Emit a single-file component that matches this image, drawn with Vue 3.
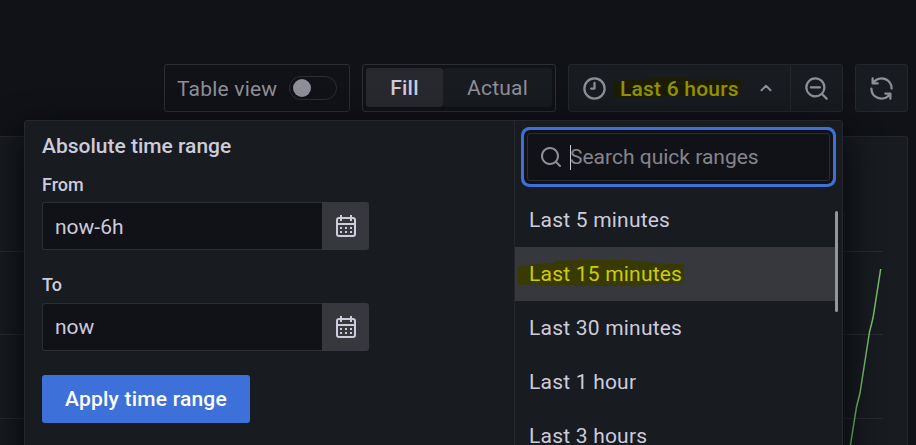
<script setup>
import { ref } from 'vue'

const fields = ref([
  { label: 'From', value: 'now-6h' },
  { label: 'To', value: 'now' },
])
const ranges = ['Last 5 minutes', 'Last 15 minutes', 'Last 30 minutes', 'Last 1 hour', 'Last 3 hours']
const active = 'Last 15 minutes'
</script>

<template>
  <div class="page">
    <header class="toolbar">
      <div class="box table-view">
        <span class="table-label">Table view</span>
        <span class="switch"><i class="knob"></i></span>
      </div>
      <div class="box radio">
        <span class="option selected">Fill</span>
        <span class="option">Actual</span>
      </div>
      <div class="picker">
        <button class="btn time">
          <svg class="glyph" width="27" height="27" viewBox="0 0 24 24">
            <path d="M12,2A10,10,0,1,0,22,12,10,10,0,0,0,12,2Zm0,18a8,8,0,1,1,8-8A8,8,0,0,1,12,20ZM12,6a1,1,0,0,0-1,1v4H9a1,1,0,0,0,0,2h3a1,1,0,0,0,1-1V7A1,1,0,0,0,12,6Z" />
          </svg>
          <span class="marked time-label">
            <svg class="marker" width="128" height="22" viewBox="0 0 128 22">
              <path d="M0 3H11V2H24V1H36V0H74V1H128V17H103V18H50V19H14V20H0Z" />
            </svg>
            <span class="marked-text">Last 6 hours</span>
          </span>
          <svg class="icon chevron" width="12" height="8" viewBox="0 0 12 8"><path d="M1.5 6.3 6 1.8 10.5 6.3" /></svg>
        </button>
        <button class="btn zoom">
          <svg class="glyph" width="27" height="27" viewBox="0 0 24 24">
            <path d="M21.71,20.29,18,16.61A9,9,0,1,0,16.61,18l3.68,3.68a1,1,0,0,0,1.42,0A1,1,0,0,0,21.71,20.29ZM11,18a7,7,0,1,1,7-7A7,7,0,0,1,11,18ZM15,10H7a1,1,0,0,0,0,2h8a1,1,0,0,0,0-2Z" />
          </svg>
        </button>
      </div>
      <button class="btn refresh">
        <svg class="glyph" width="27" height="27" viewBox="0 0 24 24">
          <path d="M19.91,15.51H15.38a1,1,0,0,0,0,2h2.4A8,8,0,0,1,4,12a1,1,0,0,0-2,0,10,10,0,0,0,16.88,7.23V21a1,1,0,0,0,2,0V16.5A1,1,0,0,0,19.91,15.51ZM12,2A10,10,0,0,0,5.12,4.77V3a1,1,0,0,0-2,0V7.5a1,1,0,0,0,1,1h4.5a1,1,0,0,0,0-2H6.22A8,8,0,0,1,20,12a1,1,0,0,0,2,0A10,10,0,0,0,12,2Z" />
        </svg>
      </button>
    </header>

    <main class="panel">
      <svg class="chart" width="908" height="308" viewBox="0 0 908 308">
        <path class="grid" d="M0 114.5H883M0 197.5H883M0 281.5H883M844.5 73V308" />
        <path class="series" d="M880.7 132 873 181 869.5 195 860 256 856.5 270 850.3 309" />
      </svg>
    </main>

    <div class="popup">
      <section class="absolute-range">
        <h3>Absolute time range</h3>
        <div v-for="f in fields" :key="f.label" class="field">
          <label>{{ f.label }}</label>
          <div class="input-row">
            <div class="input">{{ f.value }}</div>
            <button class="calendar">
              <svg width="20" height="22" viewBox="0 0 20 22">
                <rect class="frame" x="1" y="3" width="18" height="18" rx="2" />
                <path class="frame" d="M5 0V6M15 0V6M1 9H19" />
                <path class="dots" d="M4 12h2v2H4zM9 12h2v2H9zM14 12h2v2h-2zM4 16h2v2H4zM9 16h2v2H9zM14 16h2v2h-2z" />
              </svg>
            </button>
          </div>
        </div>
        <button class="apply">Apply time range</button>
      </section>
      <section class="quick">
        <div class="search">
          <svg class="glyph-flat" width="24" height="24" viewBox="0 0 24 24">
            <path d="M21.71,20.29,18,16.61A9,9,0,1,0,16.61,18l3.68,3.68a1,1,0,0,0,1.42,0A1,1,0,0,0,21.71,20.29ZM11,18a7,7,0,1,1,7-7A7,7,0,0,1,11,18Z" />
          </svg>
          <i class="caret"></i>
          <span class="placeholder">Search quick ranges</span>
        </div>
        <ul class="list">
          <li v-for="r in ranges" :key="r" :class="{ active: r === active }">
            <span v-if="r === active" class="marked">
              <svg class="marker row-marker" width="167" height="28" viewBox="0 0 167 28">
                <path d="M0 7 3 6 18 4 36 3V1L62 0H113L128 2 145 4H166V22L167 23 142 24 122 25 113 26H64L55 25H17V24L0 25Z" />
              </svg>
              <span class="marked-text bright">{{ r }}</span>
            </span>
            <template v-else>{{ r }}</template>
          </li>
        </ul>
        <i class="scrollbar"></i>
      </section>
    </div>
  </div>
</template>

<style>
body { background: #111217; overflow: hidden; }
</style>

<style scoped>
* { box-sizing: border-box; }
.page {
  position: relative;
  display: flex;
  flex-direction: column;
  height: 445px;
  overflow: hidden;
  background: #111217;
  color: #ccccdc;
  font: 400 21px/32px Roboto, sans-serif;
  letter-spacing: 0.21px;
}
button { font: inherit; letter-spacing: inherit; color: inherit; padding: 0; margin: 0; border: 0; }
.toolbar {
  display: flex;
  justify-content: flex-end;
  gap: 12px;
  padding: 64px 8px 0 0;
  color: #8e8e99;
}
.box { height: 48px; border: 1px solid #2d2e34; border-radius: 3px; }
.table-view { display: flex; align-items: center; justify-content: space-between; width: 186px; padding: 0 12px; }
.table-label { padding-top: 2px; }
.switch { display: flex; align-items: center; width: 48px; height: 24px; padding-left: 3px; border: 1px solid #2d2e34; border-radius: 12px; }
.knob { width: 18px; height: 18px; border-radius: 50%; background: #8e8e99; }
.radio { display: flex; width: 194px; padding: 3px; }
.option { display: flex; align-items: center; justify-content: center; height: 39px; flex: 1; background: #181b1f; border-radius: 3px; }
.option.selected { flex: 0 0 77px; background: #28292e; color: #ccccdc; font-weight: 500; }
.picker { display: flex; }
.btn { display: flex; align-items: center; height: 48px; background: #181b1f; border: 1px solid #25272c; border-radius: 3px; }
.time { width: 223px; padding: 0 18px 0 12px; border-radius: 3px 0 0 3px; font-weight: 500; }
.zoom { width: 53px; justify-content: center; margin-left: -1px; border-radius: 0 3px 3px 0; }
.refresh { width: 53px; justify-content: center; }
.icon { flex: none; fill: none; stroke: #8e8e99; stroke-width: 2; stroke-linecap: round; stroke-linejoin: round; }
.glyph, .glyph-flat { flex: none; fill: #8e8e99; }
.glyph { margin-top: 1px; }
.chevron { margin-left: auto; }
.marked { position: relative; }
.time-label { margin-left: 12px; }
.marker { position: absolute; left: -7px; top: 6px; fill: #1b1c00; }
.time-label .marked-text { display: block; padding-top: 1px; margin-bottom: -1px; }
.row-marker { left: -11px; top: 2px; fill: #383a00; }
.marked-text { position: relative; color: #929200; }
.bright { color: #cccd00; }
.panel { width: 908px; height: 309px; margin-top: 24px; background: #181b1f; border: 1px solid #25272c; border-width: 1px 1px 0 0; border-radius: 0 3px 0 0; }
.chart { display: block; fill: none; }
.grid { stroke: #292c30; }
.series { stroke: #73bf69; stroke-width: 1.5; }
.popup {
  position: absolute;
  left: 24px;
  top: 120px;
  display: flex;
  width: 819px;
  height: 420px;
  background: #181b1f;
  border: 1px solid #25272c;
  border-radius: 3px;
  box-shadow: 0 12px 36px #010409;
}
.absolute-range { width: 490px; padding: 9px 17px; border-right: 1px solid #25272c; }
h3 { margin: 0 0 8px; font: 500 21px/32px Roboto, sans-serif; letter-spacing: 0; }
.field { margin-bottom: 24px; }
label { display: block; height: 32px; font: 500 18px/29px Roboto, sans-serif; letter-spacing: 0; }
.field + .field label { line-height: 27px; }
.input-row { display: flex; }
.input { display: flex; align-items: center; width: 280px; height: 48px; padding: 2px 0 0 12px; background: #111217; border: 1px solid #2d2e34; border-right: 0; border-radius: 3px 0 0 3px; letter-spacing: 0; }
.field + .field .input { padding-top: 0; }
.calendar { display: flex; align-items: center; justify-content: center; width: 47px; height: 48px; background: #36383d; border-radius: 0 3px 3px 0; }
.frame { fill: none; stroke: #ccccdc; stroke-width: 2; }
.dots { fill: #ccccdc; }
.field + .field { margin-top: -3px; }
.apply { width: 208px; height: 48px; background: #3d71d9; border-radius: 3px; color: #fff; font-weight: 500; }
.quick { position: relative; flex: 1; padding: 12px 12px 0 0; }
.search {
  display: flex;
  align-items: center;
  height: 48px;
  margin-left: 12px;
  padding-left: 11px;
  background: #111217;
  border: 1px solid #2d2e34;
  border-radius: 3px;
  color: #84858e;
  letter-spacing: 0;
  box-shadow: 0 0 0 3px #111217, 0 0 0 6px #3d71d9;
}
.caret { width: 1px; height: 25px; margin-left: 7px; background: #ccccdc; }
.placeholder { margin-left: -1px; }
.list { margin: 12px -5px 0 0; padding: 0; list-style: none; }
.list li { display: flex; align-items: center; height: 54px; padding-left: 14px; }
.list .active { background: #36383d; }
.scrollbar { position: absolute; right: 4px; top: 90px; width: 3px; height: 101px; background: #979797; border-radius: 2px; }
</style>
